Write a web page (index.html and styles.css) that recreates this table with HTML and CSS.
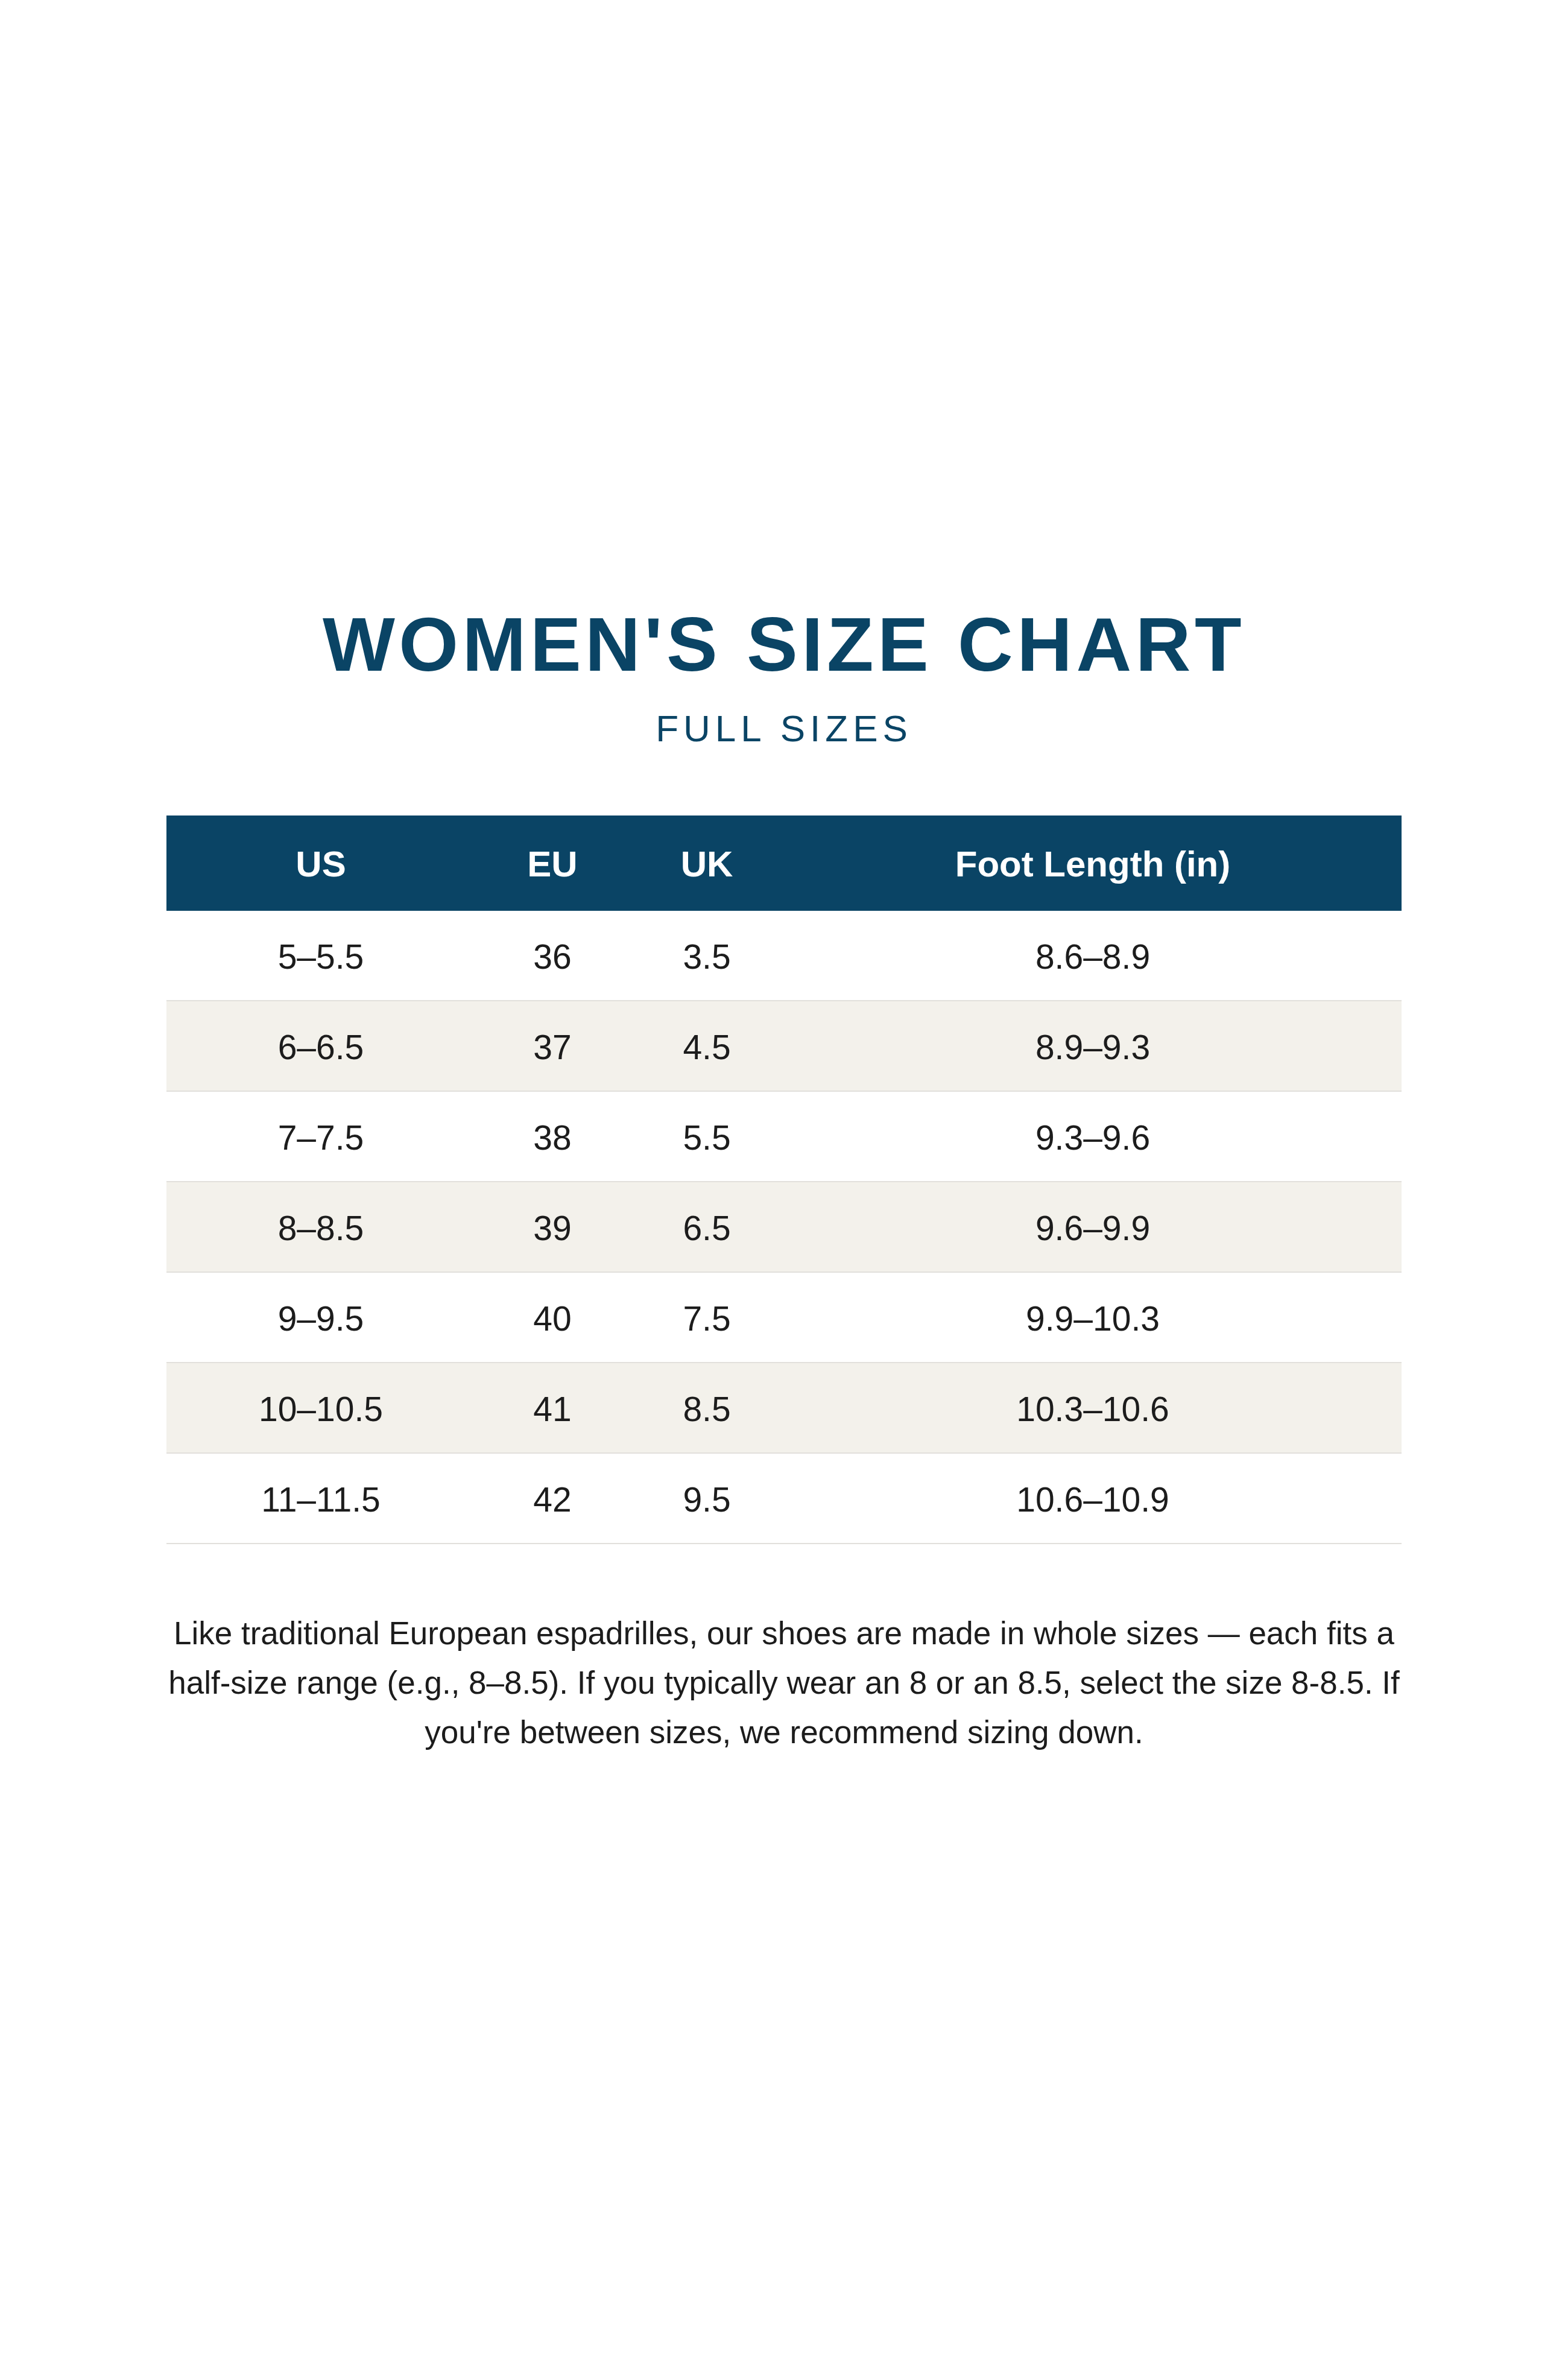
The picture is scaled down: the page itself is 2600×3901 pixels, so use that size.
FILE: index.html
```html
<!DOCTYPE html>
<html lang="en">
<head>
<meta charset="utf-8">
<title>Women's Size Chart</title>
<link rel="stylesheet" href="styles.css">
</head>
<body>
<main class="page">
  <header class="heading">
    <h1 class="title">WOMEN'S SIZE CHART</h1>
    <p class="subtitle">FULL SIZES</p>
  </header>
  <table class="chart">
    <colgroup>
      <col class="c-us"><col class="c-eu"><col class="c-uk"><col class="c-foot">
    </colgroup>
    <thead>
      <tr><th>US</th><th>EU</th><th>UK</th><th>Foot Length (in)</th></tr>
    </thead>
    <tbody>
      <tr><td>5–5.5</td><td>36</td><td>3.5</td><td>8.6–8.9</td></tr>
      <tr><td>6–6.5</td><td>37</td><td>4.5</td><td>8.9–9.3</td></tr>
      <tr><td>7–7.5</td><td>38</td><td>5.5</td><td>9.3–9.6</td></tr>
      <tr><td>8–8.5</td><td>39</td><td>6.5</td><td>9.6–9.9</td></tr>
      <tr><td>9–9.5</td><td>40</td><td>7.5</td><td>9.9–10.3</td></tr>
      <tr><td>10–10.5</td><td>41</td><td>8.5</td><td>10.3–10.6</td></tr>
      <tr><td>11–11.5</td><td>42</td><td>9.5</td><td>10.6–10.9</td></tr>
    </tbody>
  </table>
  <p class="note">Like traditional European espadrilles, our shoes are made in whole sizes — each fits a half-size range (e.g., 8–8.5). If you typically wear an 8 or an 8.5, select the size 8-8.5. If you're between sizes, we recommend sizing down.</p>
</main>
</body>
</html>
```
FILE: styles.css
```css
html, body {
  margin: 0;
  padding: 0;
  background: #ffffff;
}
body {
  font-family: "Liberation Sans", Arial, Helvetica, sans-serif;
  color: #1c1c1c;
  min-height: 3901px;
}
.page {
  width: 2048px;
  margin: 0 auto;
  padding-top: 1005px;
}
.heading {
  text-align: center;
}
.title {
  margin: 0;
  font-size: 127px;
  line-height: 1;
  font-weight: 700;
  letter-spacing: 6.5px;
  color: #0a4465;
}
.subtitle {
  margin: 45px 0 0;
  font-size: 62px;
  line-height: 1;
  font-weight: 400;
  letter-spacing: 8px;
  color: #0a4465;
}
.chart {
  width: 2048px;
  margin-top: 113px;
  border-collapse: collapse;
  table-layout: fixed;
}
.c-us { width: 25%; }
.c-eu { width: 12.5%; }
.c-uk { width: 12.5%; }
.c-foot { width: 50%; }
.chart th {
  height: 155px;
  padding: 3px 0 0;
  background: #0a4465;
  color: #ffffff;
  font-size: 60px;
  font-weight: 700;
  text-align: center;
  vertical-align: middle;
}
.chart td {
  height: 145px;
  padding: 3px 0 0;
  font-size: 57px;
  text-align: center;
  vertical-align: middle;
  border-bottom: 2px solid #e2e0dc;
  color: #1c1c1c;
}
.chart tbody tr:nth-child(even) td {
  background: #f3f1eb;
}
.note {
  margin: 107px 0 0;
  font-size: 53px;
  line-height: 82px;
  text-align: center;
  color: #1c1c1c;
}
```
